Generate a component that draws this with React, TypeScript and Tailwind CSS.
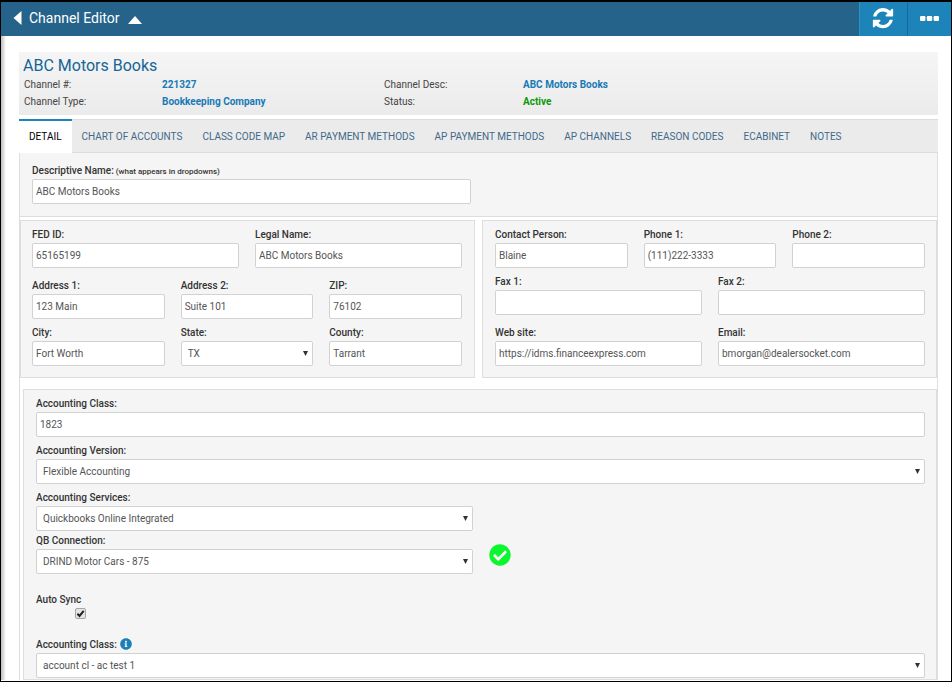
import { useId, useState } from "react";
import type { ReactNode } from "react";
import { FaCheckCircle, FaInfoCircle } from "react-icons/fa";

type FieldProps = {
	label: string;
	value: string;
	hint?: string;
	icon?: ReactNode;
};

const TABS = [
	"DETAIL",
	"CHART OF ACCOUNTS",
	"CLASS CODE MAP",
	"AR PAYMENT METHODS",
	"AP PAYMENT METHODS",
	"AP CHANNELS",
	"REASON CODES",
	"ECABINET",
	"NOTES"
];

function RefreshIcon() {
	return (
		<svg
			aria-hidden="true"
			className="h-[22px] w-[22px] fill-white"
			viewBox="0 0 1536 1664"
		>
			<path d="M1511 928q0 5-1 7-64 268-268 434.5t-478 166.5q-146 0-282.5-55t-243.5-157l-129 129q-19 19-45 19t-45-19-19-45v-448q0-26 19-45t45-19h448q26 0 45 19t19 45-19 45l-137 137q71 66 161 102t187 36q134 0 250-65t186-179q11-17 53-117 8-23 30-23h192q13 0 22.5 9.5t9.5 22.5zm25-800v448q0 26-19 45t-45 19h-448q-26 0-45-19t-19-45 19-45l138-138q-148-137-349-137-134 0-250 65t-186 179q-11 17-53 117-8 23-30 23h-199q-13 0-22.5-9.5t-9.5-22.5v-7q65-268 270-434.5t480-166.5q146 0 284 55.5t245 156.5l130-129q19-19 45-19t45 19 19 45z" />
		</svg>
	);
}

function Header() {
	return (
		<header className="flex h-[34px] items-stretch bg-[#25638b] text-white">
			<div className="flex flex-1 items-center pb-[3px] pl-3">
				<button aria-label="Back" type="button">
					<svg className="h-4 w-[9px] fill-white" viewBox="0 0 9 16">
						<path d="M8.5 1v14L0.5 8z" />
					</svg>
				</button>
				<h1 className="ml-[7px] text-[14px] leading-4">Channel Editor</h1>
				<button aria-label="Collapse" className="ml-2 pt-1" type="button">
					<svg className="h-2 w-[14px] fill-white" viewBox="0 0 14 8">
						<path d="M7 0l7 8H0z" />
					</svg>
				</button>
			</div>
			<button
				aria-label="Refresh"
				className="flex w-12 items-center justify-center border-[#2b93c6] border-l bg-[#1c84b9] pr-0.5"
				type="button"
			>
				<RefreshIcon />
			</button>
			<button
				aria-label="More"
				className="flex w-11 items-center justify-center border-[#156a97] border-l bg-[#1c84b9] pb-0.5"
				type="button"
			>
				<svg className="h-[5px] w-[19px] fill-white" viewBox="0 0 19 5">
					<rect height="5" rx="1.2" width="5.4" x="0" />
					<rect height="5" rx="1.2" width="5.4" x="6.8" />
					<rect height="5" rx="1.2" width="5.4" x="13.6" />
				</svg>
			</button>
		</header>
	);
}

function Summary() {
	return (
		<section className="bg-linear-to-b from-[#f5f5f5] to-[#ebebeb] pt-1 pb-[5px] pl-1">
			<h2 className="text-[#156596] text-[16px] leading-5">ABC Motors Books</h2>
			<dl className="grid grid-cols-[138fr_222fr_139fr_415fr] pl-px text-[#444] text-[10px] leading-[17px]">
				<dt>Channel #:</dt>
				<dd className="font-bold text-[#187ab5]">221327</dd>
				<dt>Channel Desc:</dt>
				<dd className="font-bold text-[#187ab5]">ABC Motors Books</dd>
				<dt>Channel Type:</dt>
				<dd className="font-bold text-[#187ab5]">Bookkeeping Company</dd>
				<dt>Status:</dt>
				<dd className="font-bold text-[#0a990a]">Active</dd>
			</dl>
		</section>
	);
}

function Tabs() {
	const [active, setActive] = useState("DETAIL");

	return (
		<nav className="mt-1 flex h-[34px] border-[#dcdcdc] border-t bg-[#ebebeb]">
			{TABS.map((tab) => (
				<button
					className={
						tab === active
							? "-mt-px border-t-[#1c84b9] border-t-2 border-b border-b-white bg-white px-2.5 text-[10px] text-black"
							: "-mt-px border-t-2 border-t-transparent border-b border-b-[#dcdcdc] px-2.5 text-[#41698a] text-[10px]"
					}
					key={tab}
					onClick={() => setActive(tab)}
					type="button"
				>
					{tab}
				</button>
			))}
			<div className="flex-1 border-[#dcdcdc] border-b" />
		</nav>
	);
}

function FieldLabel({
	id,
	label,
	hint,
	icon
}: Omit<FieldProps, "value"> & { id: string }) {
	return (
		<div className="flex h-4 items-center gap-[3px]">
			<label
				className="whitespace-nowrap font-medium text-[#333] text-[10px] leading-4"
				htmlFor={id}
			>
				{label}
				{hint && <span className="text-[8px]"> {hint}</span>}
			</label>
			{icon}
		</div>
	);
}

function TextField({ label, value, hint }: FieldProps) {
	const id = useId();

	return (
		<div className="min-w-0">
			<FieldLabel hint={hint} id={id} label={label} />
			<input
				className="block h-[25px] w-full rounded-xs border border-[#d2d2d2] bg-white px-[3px] text-[#555] text-[10px]"
				defaultValue={value}
				id={id}
				type="text"
			/>
		</div>
	);
}

function SelectField({ label, value, icon }: FieldProps) {
	const id = useId();

	return (
		<div className="min-w-0">
			<FieldLabel icon={icon} id={id} label={label} />
			<div className="relative">
				<select
					className="block h-[25px] w-full appearance-none rounded-xs border border-[#d2d2d2] bg-white px-1.5 text-[#555] text-[10px]"
					defaultValue={value}
					id={id}
				>
					<option>{value}</option>
				</select>
				<svg
					aria-hidden="true"
					className="pointer-events-none absolute top-2.5 right-[5px] h-[5px] w-[5px] fill-[#333]"
					viewBox="0 0 5 5"
				>
					<path d="M0 0h5L2.5 5z" />
				</svg>
			</div>
		</div>
	);
}

function AddressPanel() {
	return (
		<section className="border border-[#dedede] bg-[#f5f5f5] pt-1.5 pr-3 pb-[11px] pl-[11px]">
			<div className="grid grid-cols-2 gap-4">
				<TextField label="FED ID:" value="65165199" />
				<TextField label="Legal Name:" value="ABC Motors Books" />
			</div>
			<div className="mt-2.5 grid grid-cols-3 gap-x-4 gap-y-1.5">
				<TextField label="Address 1:" value="123 Main" />
				<TextField label="Address 2:" value="Suite 101" />
				<TextField label="ZIP:" value="76102" />
				<TextField label="City:" value="Fort Worth" />
				<SelectField label="State:" value="TX" />
				<TextField label="County:" value="Tarrant" />
			</div>
		</section>
	);
}

function ContactPanel() {
	return (
		<section className="border border-[#dedede] bg-[#f5f5f5] pt-1.5 pr-[11px] pb-[11px] pl-3">
			<div className="grid grid-cols-3 gap-4">
				<TextField label="Contact Person:" value="Blaine" />
				<TextField label="Phone 1:" value="(111)222-3333" />
				<TextField label="Phone 2:" value="" />
			</div>
			<div className="mt-1.5 grid grid-cols-2 gap-x-4 gap-y-2.5">
				<TextField label="Fax 1:" value="" />
				<TextField label="Fax 2:" value="" />
				<TextField label="Web site:" value="https://idms.financeexpress.com" />
				<TextField label="Email:" value="bmorgan@dealersocket.com" />
			</div>
		</section>
	);
}

function AutoSync() {
	const [checked, setChecked] = useState(true);

	return (
		<div className="mt-[18px] w-[50px]">
			<label
				className="block font-medium text-[#333] text-[10px] leading-4"
				htmlFor="auto-sync"
			>
				Auto Sync
			</label>
			<div className="relative ml-auto h-[11px] w-[11px]">
				<input
					checked={checked}
					className="block h-[11px] w-[11px] appearance-none rounded-xs border border-[#a6a6a6] bg-[#e4e4e4]"
					id="auto-sync"
					onChange={(e) => setChecked(e.target.checked)}
					type="checkbox"
				/>
				{checked && (
					<svg
						aria-hidden="true"
						className="pointer-events-none absolute inset-0 h-[11px] w-[11px] fill-none stroke-[#222]"
						viewBox="0 0 11 11"
					>
						<path d="M2.4 5.8l2.1 2.2L8.7 2.8" strokeWidth="2" />
					</svg>
				)}
			</div>
		</div>
	);
}

function AccountingPanel() {
	return (
		<section className="mt-[11px] ml-[3px] border border-[#dedede] bg-[#f5f5f5] pt-1.5 pr-[11px] pb-px pl-3">
			<div className="flex flex-col gap-1.5">
				<TextField label="Accounting Class:" value="1823" />
				<SelectField label="Accounting Version:" value="Flexible Accounting" />
				<div className="grid grid-cols-2 gap-x-4 gap-y-0.5">
					<SelectField
						label="Accounting Services:"
						value="Quickbooks Online Integrated"
					/>
					<div className="col-start-1">
						<SelectField label="QB Connection:" value="DRIND Motor Cars - 875" />
					</div>
					<FaCheckCircle
						className="mb-2 self-end text-[#0bf62c]"
						size={22}
					/>
				</div>
			</div>
			<AutoSync />
			<div className="mt-[18px]">
				<SelectField
					icon={<FaInfoCircle className="mb-0.5 text-[#1c7fb5]" size={12} />}
					label="Accounting Class:"
					value="account cl - ac test 1"
				/>
			</div>
		</section>
	);
}

export default function App() {
	return (
		<div className="min-h-screen border border-black border-t-2 bg-white font-[Roboto,sans-serif]">
			<Header />
			<div className="bg-[linear-gradient(to_right,#bdbdbd,#ffffff_5px)] px-[18px] pt-4 pr-[13px]">
				<Summary />
				<Tabs />
				<main className="border-[#dedede] border-x">
					<section className="border-[#dedede] border-b bg-[#f5f5f5] px-3 pt-2.5 pb-3">
						<div className="grid grid-cols-2 gap-4">
							<TextField
								hint="(what appears in dropdowns)"
								label="Descriptive Name:"
								value="ABC Motors Books"
							/>
						</div>
					</section>
					<div className="mt-[3px] grid grid-cols-2 gap-[7px]">
						<AddressPanel />
						<ContactPanel />
					</div>
					<AccountingPanel />
				</main>
			</div>
		</div>
	);
}
